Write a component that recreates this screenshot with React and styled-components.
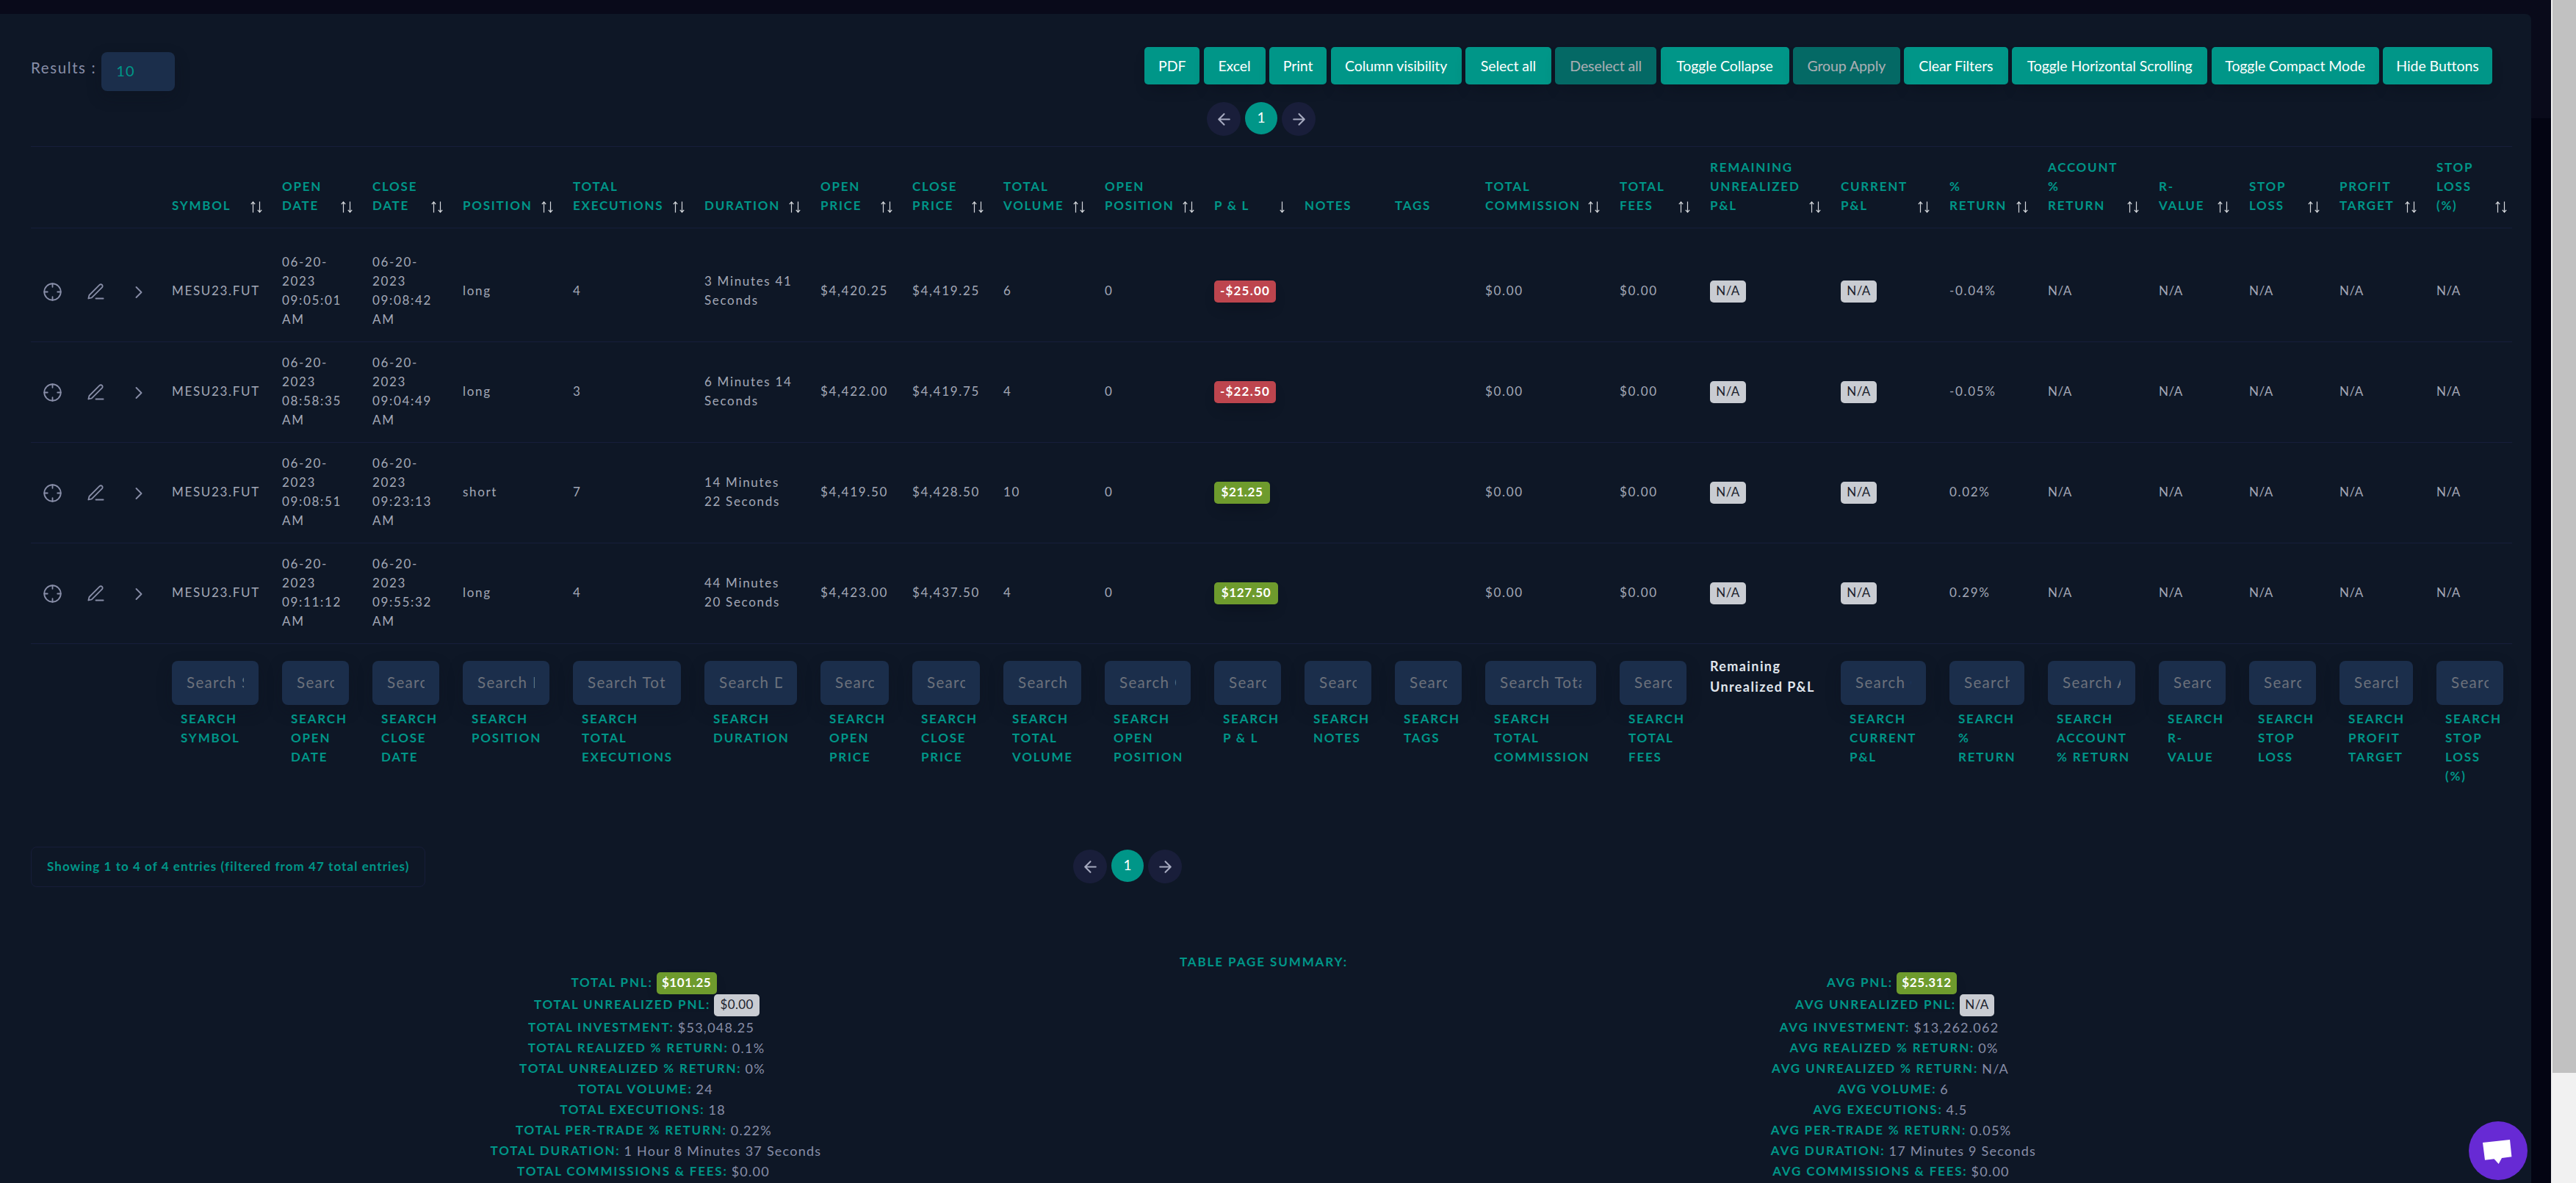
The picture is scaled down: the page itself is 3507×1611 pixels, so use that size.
import React from "react";
import styled, { createGlobalStyle } from "styled-components";

const teal = "#009688";
const line = "#161e3b";

const GlobalStyle = createGlobalStyle`
  html, body { margin: 0; padding: 0; height: 100%; overflow: hidden; }
  body { font-family: Lato, "Open Sans", sans-serif; background: #030412; }
  *, *::before, *::after { box-sizing: border-box; }
  input, button { font-family: inherit; }
`;

const Page = styled.div`
  display: flex;
  width: 3507px;
  height: 1611px;
  overflow: hidden;
  background: linear-gradient(#090a1a 0 161px, #030412 161px);
`;

const Main = styled.main`
  flex: 1;
  min-width: 0;
  padding: 19px 27px 0 0;
`;

const Panel = styled.section`
  height: 1700px;
  padding: 45px 26px 0 42px;
  background: #0e1726;
  border-radius: 0 8px 0 0;
`;

const ScrollTrack = styled.div`
  flex: none;
  width: 34px;
  padding-left: 2px;
  background: #f1f1f1;
`;

const ScrollThumb = styled.div`
  height: 1461px;
  background: #c1c1c1;
`;

const TopBar = styled.div`
  display: flex;
  justify-content: space-between;
  align-items: flex-start;
  height: 75px;
  padding-right: 27px;
`;

const Results = styled.label`
  display: flex;
  align-items: flex-start;
  gap: 7px;
  padding-top: 7px;
  color: #888ea8;
  font-size: 20.5px;
  line-height: 42px;
  letter-spacing: 1.6px;
`;

const ResultsInput = styled.input`
  width: 100px;
  height: 53px;
  padding: 0 20px 4px;
  border: 0;
  border-radius: 8px;
  background: #1b2e4b;
  color: ${teal};
  font-size: 20px;
  letter-spacing: 1.2px;
  box-shadow: 0 8px 20px rgba(10, 16, 28, 0.25);
`;

const Buttons = styled.div`
  display: flex;
  gap: 5.3px;
`;

const Button = styled.button`
  width: ${(p) => p.$w}px;
  height: 51px;
  padding: 0 0 1px;
  border: 0;
  border-radius: 5px;
  background: ${teal};
  color: #fff;
  font-size: 19.5px;
  letter-spacing: -0.08px;
  white-space: nowrap;
  opacity: ${(p) => (p.disabled ? 0.65 : 1)};
  box-shadow: 0 10px 20px -10px rgba(8, 12, 22, 0.6);
`;

const Pager = styled.nav`
  display: flex;
  gap: 6px;
  margin-left: ${(p) => p.$left}px;
`;

const PageDot = styled.span`
  display: flex;
  align-items: center;
  justify-content: center;
  width: ${(p) => (p.$active ? 44 : 46)}px;
  height: ${(p) => (p.$active ? 44 : 46)}px;
  padding-bottom: ${(p) => (p.$active ? 3 : 0)}px;
  border-radius: 50%;
  background: ${(p) => (p.$active ? teal : "#191e3a")};
  color: ${(p) => (p.$active ? "#fff" : "#a6aabf")};
  font-size: 19px;
`;

const Table = styled.div`
  margin-top: 14px;
  width: 3378px;
  border-top: 1px solid ${line};
`;

const Row = styled.div`
  display: grid;
  grid-template-columns:
    58.7px 58.7px 58.6px 150px 123px 123px 150px 179px 158px 125px 124px 138px 149px
    123px 123px 123px 183px 123px 178px 148px 134px 151px 123px 123px 132px 119px;
`;

const HeadRow = styled(Row)`
  height: 111px;
  padding: 15px 0 17px;
  align-items: end;
  border-bottom: 1px solid ${line};
`;

const HeadCell = styled.div`
  display: flex;
  justify-content: space-between;
  align-items: flex-end;
  padding: 0 10.5px 0 16px;
  color: ${teal};
  font-size: 17px;
  font-weight: 700;
  line-height: 26px;
  letter-spacing: 1.75px;
  white-space: pre;

  &:last-child { padding-right: 7px; }
  svg { flex: none; margin: 0 0 3px -12px; }
`;

const DataRow = styled(Row)`
  height: ${(p) => (p.$first ? 155 : 137)}px;
  padding: ${(p) => (p.$first ? 33 : 15)}px 0 17px;
  align-items: center;
  border-bottom: 1px solid ${line};
`;

const Cell = styled.div`
  padding-left: 16px;
  color: #a3a8b6;
  font-size: 17px;
  line-height: 26px;
  letter-spacing: ${(p) => (p.$tight ? 0.5 : 1.68)}px;
  white-space: pre;
`;

const IconCell = styled.div`
  display: flex;
  justify-content: center;
  padding: 3px 0 0 0;
  color: #888ea8;
`;

const badgeTone = {
  loss: "#bd454e",
  gain: "#6e9b2d",
  none: "#c9ccd2",
};

const badgeSpacing = { loss: 1.2, gain: 0.6, none: 0.4 };

const Badge = styled.span`
  display: block;
  width: ${(p) => p.$w}px;
  height: 30px;
  margin-top: ${(p) => p.$drop || 0}px;
  border-radius: 5px;
  background: ${(p) => badgeTone[p.$tone]};
  color: ${(p) => (p.$tone === "none" ? "#1b1e2c" : "#fff")};
  font-size: 17px;
  font-weight: ${(p) => (p.$tone === "none" ? 400 : 700)};
  line-height: 28px;
  letter-spacing: ${(p) => badgeSpacing[p.$tone]}px;
  text-align: center;
  white-space: nowrap;
  box-shadow: ${(p) => (p.$tone === "none" ? "none" : "0 10px 20px -8px rgba(6, 9, 18, 0.45)")};
`;

const FootRow = styled(Row)`
  height: 276px;
  padding-top: 23px;
  align-items: start;
`;

const FootCell = styled.div`
  padding: 0 16px;
  &:last-child { padding-right: 12px; }
`;

const SearchInput = styled.input`
  display: block;
  width: 100%;
  height: 60px;
  padding: 0 19.5px 2px 20px;
  border: 0;
  border-radius: 8px;
  background: #1b2e4b;
  font-size: 20.5px;
  letter-spacing: 1.35px;
  box-shadow: 0 8px 20px rgba(10, 16, 28, 0.25);

  &::placeholder { color: #6c717b; opacity: 1; }
`;

const SearchLabel = styled.div`
  margin-top: 6px;
  padding-left: 12px;
  color: ${teal};
  font-size: 17px;
  font-weight: 700;
  line-height: 26px;
  letter-spacing: 1.8px;
  white-space: pre;
`;

const FootTitle = styled.div`
  margin-top: -7px;
  color: #e0e6ed;
  font-size: 18px;
  font-weight: 700;
  line-height: 28px;
  letter-spacing: 1.4px;
  white-space: pre;
`;

const BottomBar = styled.div`
  display: flex;
  align-items: flex-start;
`;

const Info = styled.div`
  width: 537px;
  height: 55px;
  padding-left: 21px;
  border: 1px solid #171d39;
  border-radius: 8px;
  color: ${teal};
  font-size: 17px;
  font-weight: 700;
  line-height: 52px;
  letter-spacing: 1.06px;
  white-space: nowrap;
`;

const PagerSlot = styled.div`
  padding-top: 4px;
`;

const Summary = styled.section`
  margin: 87px 0 0 -16px;
  width: 3398px;
`;

const SummaryTitle = styled.div`
  padding-right: 9px;
  height: 29px;
  color: ${teal};
  font-size: 17px;
  font-weight: 700;
  line-height: 29px;
  letter-spacing: 1.9px;
  text-align: center;
`;

const SummaryColumns = styled.div`
  display: grid;
  grid-template-columns: 1fr 1fr;
`;

const SummaryLine = styled.div`
  display: flex;
  justify-content: center;
  align-items: center;
  gap: 5px;
  height: ${(p) => p.$h || 28}px;
  padding-left: ${(p) => Math.max(0, p.$shift * 2)}px;
  padding-right: ${(p) => Math.max(0, -p.$shift * 2)}px;
  line-height: 28px;
  white-space: nowrap;
`;

const SummaryLabel = styled.span`
  padding-bottom: ${(p) => (p.$raised ? 3 : 0)}px;
  color: ${teal};
  font-size: 17px;
  font-weight: 700;
  letter-spacing: 1.8px;
`;

const SummaryValue = styled.span`
  color: #888ea8;
  font-size: 18px;
  letter-spacing: 1.25px;
`;

const Chat = styled.button`
  position: absolute;
  left: 3361px;
  top: 1527px;
  width: 80px;
  height: 80px;
  padding: 0;
  border: 0;
  border-radius: 50%;
  background: #672ad4;
`;

const buttons = [
  ["PDF", 75], ["Excel", 84], ["Print", 78.5], ["Column visibility", 178], ["Select all", 117],
  ["Deselect all", 138, true], ["Toggle Collapse", 175], ["Group Apply", 146, true],
  ["Clear Filters", 141.5], ["Toggle Horizontal Scrolling", 266.5], ["Toggle Compact Mode", 228],
  ["Hide Buttons", 149],
];

const columns = [
  { head: "SYMBOL", ask: "Search Symbol", label: "SEARCH\nSYMBOL" },
  { head: "OPEN\nDATE", ask: "Search Open Date", label: "SEARCH\nOPEN\nDATE" },
  { head: "CLOSE\nDATE", ask: "Search Close Date", label: "SEARCH\nCLOSE\nDATE" },
  { head: "POSITION", ask: "Search Position", label: "SEARCH\nPOSITION" },
  { head: "TOTAL\nEXECUTIONS", ask: "Search Total Executions", label: "SEARCH\nTOTAL\nEXECUTIONS" },
  { head: "DURATION", ask: "Search Duration", label: "SEARCH\nDURATION" },
  { head: "OPEN\nPRICE", ask: "Search Open Price", label: "SEARCH\nOPEN\nPRICE" },
  { head: "CLOSE\nPRICE", ask: "Search Close Price", label: "SEARCH\nCLOSE\nPRICE" },
  { head: "TOTAL\nVOLUME", ask: "Search Total Volume", label: "SEARCH\nTOTAL\nVOLUME" },
  { head: "OPEN\nPOSITION", ask: "Search Open Position", label: "SEARCH\nOPEN\nPOSITION" },
  { head: "P & L", sort: "down", ask: "Search P & L", label: "SEARCH\nP & L" },
  { head: "NOTES", sort: "none", ask: "Search Notes", label: "SEARCH\nNOTES" },
  { head: "TAGS", sort: "none", ask: "Search Tags", label: "SEARCH\nTAGS" },
  { head: "TOTAL\nCOMMISSION", ask: "Search Total Commission", label: "SEARCH\nTOTAL\nCOMMISSION" },
  { head: "TOTAL\nFEES", ask: "Search Total Fees", label: "SEARCH\nTOTAL\nFEES" },
  { head: "REMAINING\nUNREALIZED\nP&L", title: "Remaining\nUnrealized P&L" },
  { head: "CURRENT\nP&L", ask: "Search Current P&L", label: "SEARCH\nCURRENT\nP&L" },
  { head: "%\nRETURN", ask: "Search % Return", label: "SEARCH\n%\nRETURN" },
  { head: "ACCOUNT\n%\nRETURN", ask: "Search Account % Return", label: "SEARCH\nACCOUNT\n% RETURN" },
  { head: "R-\nVALUE", ask: "Search R-Value", label: "SEARCH\nR-\nVALUE" },
  { head: "STOP\nLOSS", ask: "Search Stop Loss", label: "SEARCH\nSTOP\nLOSS" },
  { head: "PROFIT\nTARGET", ask: "Search Profit Target", label: "SEARCH\nPROFIT\nTARGET" },
  { head: "STOP\nLOSS\n(%)", ask: "Search Stop Loss (%)", label: "SEARCH\nSTOP\nLOSS\n(%)" },
];

const trades = [
  { open: "09:05:01", close: "09:08:42", side: "long", execs: 4, time: "3 Minutes 41\nSeconds", buy: "$4,420.25", sell: "$4,419.25", vol: 6, pnl: "-$25.00", tone: "loss", w: 84, ret: "-0.04%" },
  { open: "08:58:35", close: "09:04:49", side: "long", execs: 3, time: "6 Minutes 14\nSeconds", buy: "$4,422.00", sell: "$4,419.75", vol: 4, pnl: "-$22.50", tone: "loss", w: 84, ret: "-0.05%" },
  { open: "09:08:51", close: "09:23:13", side: "short", execs: 7, time: "14 Minutes\n22 Seconds", buy: "$4,419.50", sell: "$4,428.50", vol: 10, pnl: "$21.25", tone: "gain", w: 76, ret: "0.02%" },
  { open: "09:11:12", close: "09:55:32", side: "long", execs: 4, time: "44 Minutes\n20 Seconds", buy: "$4,423.00", sell: "$4,437.50", vol: 4, pnl: "$127.50", tone: "gain", w: 87, ret: "0.29%" },
];

const totals = [
  ["TOTAL PNL:", "$101.25", 1, { tone: "gain", w: 82 }],
  ["TOTAL UNREALIZED PNL:", "$0.00", 5, { tone: "none", w: 62 }],
  ["TOTAL INVESTMENT:", "$53,048.25", -2.5],
  ["TOTAL REALIZED % RETURN:", "0.1%", 4.5],
  ["TOTAL UNREALIZED % RETURN:", "0%", -1],
  ["TOTAL VOLUME:", "24", 3.5],
  ["TOTAL EXECUTIONS:", "18", -0.5],
  ["TOTAL PER-TRADE % RETURN:", "0.22%", 1],
  ["TOTAL DURATION:", "1 Hour 8 Minutes 37 Seconds", 17.5],
  ["TOTAL COMMISSIONS & FEES:", "$0.00", 0.5],
];

const averages = [
  ["AVG PNL:", "$25.312", 1, { tone: "gain", w: 82 }],
  ["AVG UNREALIZED PNL:", "N/A", 5, { tone: "none", w: 47 }],
  ["AVG INVESTMENT:", "$13,262.062", -2.5],
  ["AVG REALIZED % RETURN:", "0%", 4],
  ["AVG UNREALIZED % RETURN:", "N/A", -1],
  ["AVG VOLUME:", "6", 3],
  ["AVG EXECUTIONS:", "4.5", -1],
  ["AVG PER-TRADE % RETURN:", "0.05%", 0],
  ["AVG DURATION:", "17 Minutes 9 Seconds", 17],
  ["AVG COMMISSIONS & FEES:", "$0.00", 0],
];

const Stroke = ({ size, width = 1.6, children }) => (
  <svg width={size} height={size} viewBox="0 0 24 24" fill="none" stroke="currentColor"
    strokeWidth={width} strokeLinecap="round" strokeLinejoin="round">{children}</svg>
);

const Crosshair = () => (
  <Stroke size={27}><circle cx="12" cy="12" r="10" /><path d="M22 12h-4M6 12H2M12 6V2M12 22v-4" /></Stroke>
);
const Pencil = () => (
  <Stroke size={27}><path d="M12 20h9" /><path d="M16.5 3.5a2.121 2.121 0 0 1 3 3L7 19l-4 1 1-4L16.5 3.5z" /></Stroke>
);
const Chevron = () => (
  <Stroke size={28}><path d="M9 18l6-6-6-6" /></Stroke>
);
const Arrow = ({ right }) => (
  <Stroke size={25} width={2}>
    <path d={right ? "M5 12h14M12 5l7 7-7 7" : "M19 12H5M12 19l-7-7 7-7"} />
  </Stroke>
);

const SortMark = ({ mode }) => (
  <svg width="16" height="16" viewBox="0 0 16 16" fill="none" stroke="#d5d8dc" strokeWidth="1.2">
    {mode !== "down" && <path d="M3.5 15.5V1M0.8 4.2L3.5 1L6.2 4.2" />}
    <path d="M12.5 0.5V15M9.8 11.8L12.5 15L15.2 11.8" />
  </svg>
);

const Pages = ({ left }) => (
  <Pager $left={left}>
    <PageDot><Arrow /></PageDot>
    <PageDot $active>1</PageDot>
    <PageDot><Arrow right /></PageDot>
  </Pager>
);

const TradeRow = ({ trade, first }) => (
  <DataRow $first={first}>
    <IconCell><Crosshair /></IconCell>
    <IconCell><Pencil /></IconCell>
    <IconCell><Chevron /></IconCell>
    <Cell>MESU23.FUT</Cell>
    <Cell>{`06-20-\n2023\n${trade.open}\nAM`}</Cell>
    <Cell>{`06-20-\n2023\n${trade.close}\nAM`}</Cell>
    <Cell>{trade.side}</Cell>
    <Cell>{trade.execs}</Cell>
    <Cell>{trade.time}</Cell>
    <Cell>{trade.buy}</Cell>
    <Cell>{trade.sell}</Cell>
    <Cell>{trade.vol}</Cell>
    <Cell>0</Cell>
    <Cell><Badge $tone={trade.tone} $w={trade.w} $drop={2}>{trade.pnl}</Badge></Cell>
    <Cell />
    <Cell />
    <Cell>$0.00</Cell>
    <Cell>$0.00</Cell>
    <Cell><Badge $tone="none" $w={49} $drop={2}>N/A</Badge></Cell>
    <Cell><Badge $tone="none" $w={49} $drop={2}>N/A</Badge></Cell>
    <Cell>{trade.ret}</Cell>
    <Cell $tight>N/A</Cell>
    <Cell $tight>N/A</Cell>
    <Cell $tight>N/A</Cell>
    <Cell $tight>N/A</Cell>
    <Cell $tight>N/A</Cell>
  </DataRow>
);

const SummaryList = ({ items }) => (
  <div>
    {items.map(([label, value, shift, badge], i) => (
      <SummaryLine key={label} $shift={shift} $h={badge ? 30 + i / 2 : 28}>
        <SummaryLabel $raised={!!badge}>{label}</SummaryLabel>
        {badge ? <Badge $tone={badge.tone} $w={badge.w}>{value}</Badge> : <SummaryValue>{value}</SummaryValue>}
      </SummaryLine>
    ))}
  </div>
);

export default function App() {
  return (
    <Page>
      <GlobalStyle />
      <Main>
        <Panel>
          <TopBar>
            <Results>Results :<ResultsInput defaultValue="10" /></Results>
            <Buttons>
              {buttons.map(([text, w, off]) => (
                <Button key={text} $w={w} disabled={off}>{text}</Button>
              ))}
            </Buttons>
          </TopBar>
          <Pages left={1601} />
          <Table>
            <HeadRow>
              <span /><span /><span />
              {columns.map((c) => (
                <HeadCell key={c.head}>
                  {c.head}
                  {c.sort !== "none" && <SortMark mode={c.sort} />}
                </HeadCell>
              ))}
            </HeadRow>
            {trades.map((t, i) => <TradeRow key={t.open} trade={t} first={i === 0} />)}
            <FootRow>
              <span /><span /><span />
              {columns.map((c) => (
                <FootCell key={c.head}>
                  {c.title ? <FootTitle>{c.title}</FootTitle> : (
                    <>
                      <SearchInput placeholder={c.ask} />
                      <SearchLabel>{c.label}</SearchLabel>
                    </>
                  )}
                </FootCell>
              ))}
            </FootRow>
          </Table>
          <BottomBar>
            <Info>Showing 1 to 4 of 4 entries (filtered from 47 total entries)</Info>
            <PagerSlot><Pages left={882} /></PagerSlot>
          </BottomBar>
          <Summary>
            <SummaryTitle>TABLE PAGE SUMMARY:</SummaryTitle>
            <SummaryColumns>
              <SummaryList items={totals} />
              <SummaryList items={averages} />
            </SummaryColumns>
          </Summary>
        </Panel>
      </Main>
      <ScrollTrack><ScrollThumb /></ScrollTrack>
      <Chat aria-label="Chat">
        <svg width="80" height="80" viewBox="0 0 80 80" fill="#fff">
          <path d="M19 29L56 25L58.4 48.3L45 50L40.7 58L34.5 51.3L22 52.7Z" />
        </svg>
      </Chat>
    </Page>
  );
}
